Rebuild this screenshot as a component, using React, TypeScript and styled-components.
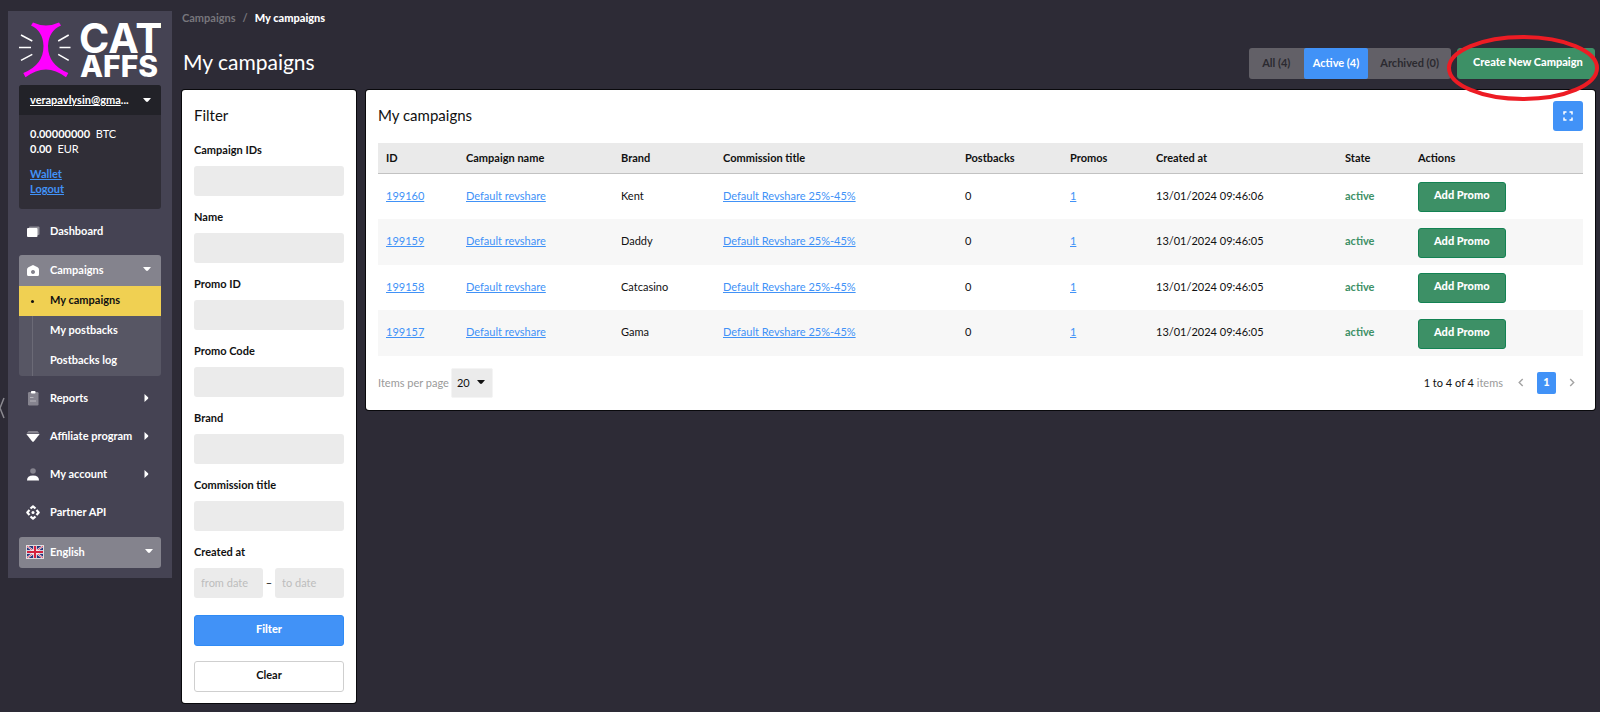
import React from "react";
import styled, { createGlobalStyle, css } from "styled-components";

const color = {
  page: "#2d2b36",
  sidebar: "#454353",
  card: "#302e37",
  cardHead: "#222228",
  raised: "#84838d",
  nested: "#575664",
  yellow: "#f0d052",
  blue: "#4192f7",
  green: "#3d9066",
  greenEdge: "#138253",
  field: "#ebebeb",
};

const GlobalStyle = createGlobalStyle`
  *, *::before, *::after { box-sizing: border-box; }
  body {
    margin: 0;
    background: ${color.page};
    color: #111;
    font-family: Lato, "Liberation Sans", sans-serif;
    font-size: 11px;
    line-height: 16px;
  }
  button, input, select { font: inherit; color: inherit; margin: 0; }
  h1, h2 { margin: 0; font-weight: 400; }
  p, ul { margin: 0; padding: 0; }
  ul { list-style: none; }
`;

const Page = styled.div`
  display: flex;
  align-items: flex-start;
  gap: 10px;
  padding: 11px 5px 9px 8px;
`;

const CollapseButton = styled.button`
  position: fixed;
  left: 0;
  top: 396px;
  width: 6px;
  height: 24px;
  padding: 0;
  border: 0;
  background: none;
  color: #8b8a91;
  svg { display: block; }
`;

/* Sidebar */

const Sidebar = styled.aside`
  flex: 0 0 164px;
  display: flex;
  flex-direction: column;
  padding: 0 11px 10px;
  background: ${color.sidebar};
  color: #fff;
  font-weight: 700;
`;

const LogoLink = styled.a`
  height: 74px;
  svg { display: block; }
`;

const UserCard = styled.section`
  height: 124px;
  border-radius: 3px;
  background: ${color.card};
  overflow: hidden;
`;

const UserHead = styled.div`
  display: flex;
  align-items: center;
  justify-content: space-between;
  height: 30px;
  padding: 0 10px 0 11px;
  background: ${color.cardHead};
  white-space: nowrap;
`;

const UserMail = styled.a`
  color: #fff;
`;

const UserBody = styled.div`
  padding: 11px 11px 0;
  line-height: 15px;
  font-weight: 400;
`;

const UserLinks = styled.div`
  display: flex;
  flex-direction: column;
  align-items: flex-start;
  margin-top: 10px;
  font-weight: 700;
`;

const TextLink = styled.a`
  color: ${color.blue};
  text-decoration: underline;
`;

const Nav = styled.nav`
  margin-top: 8px;
`;

const NavList = styled.ul`
  display: flex;
  flex-direction: column;
  gap: 8px;
`;

const NavGroup = styled.li<{ $open?: boolean }>`
  border-radius: 3px;
  overflow: hidden;
  background: ${(p) => (p.$open ? color.nested : "transparent")};
`;

const NavLink = styled.a<{ $open?: boolean }>`
  display: flex;
  align-items: center;
  height: ${(p) => (p.$open ? "31px" : "30px")};
  padding: 0 10px 2px 5px;
  color: #fff;
  text-decoration: none;
  white-space: nowrap;
  background: ${(p) => (p.$open ? color.raised : "transparent")};
  span { flex: 1; margin-left: 8px; }
`;

const SubLink = styled.a<{ $active?: boolean }>`
  display: flex;
  height: 30px;
  line-height: 28px;
  text-decoration: none;
  color: ${(p) => (p.$active ? "#111" : "#fff")};
  background: ${(p) => (p.$active ? color.yellow : "transparent")};
`;

const SubMark = styled.i<{ $active?: boolean }>`
  flex: none;
  ${(p) =>
    p.$active
      ? css`
          align-self: center;
          width: 3px;
          height: 3px;
          margin: 0 16px 0 12px;
          border-radius: 50%;
          background: #111;
        `
      : css`
          width: 1px;
          margin: 0 17px 0 13px;
          background: #6b6a76;
        `}
`;

const LanguageBox = styled.label`
  display: flex;
  align-items: center;
  height: 31px;
  margin-top: 9px;
  padding: 0 8px 2px 7px;
  border-radius: 3px;
  background: ${color.raised};
`;

const LanguageSelect = styled.select`
  flex: 1;
  appearance: none;
  border: 0;
  padding: 0;
  margin-left: 6px;
  background: none;
`;

/* Main column */

const Main = styled.main`
  flex: 1;
  min-width: 0;
`;

const Breadcrumbs = styled.nav`
  display: flex;
  gap: 7px;
  line-height: 14px;
  color: #77767c;
  font-weight: 700;
  a { color: inherit; text-decoration: none; }
  strong { color: #fff; }
`;

const Heading = styled.header`
  display: flex;
  align-items: center;
  height: 31px;
  margin: 23px 0 11px;
`;

const Title = styled.h1`
  flex: 1;
  padding: 0 1px 4px;
  color: #fff;
  font-size: 21px;
  line-height: 28px;
`;

const Segments = styled.div`
  display: flex;
  height: 31px;
  margin-right: 6px;
  border-radius: 3px;
  background: #626067;
`;

const Segment = styled.button<{ $active?: boolean }>`
  min-width: 55px;
  border: 0;
  padding: ${(p) => (p.$active ? "0 9px 2px" : "0 12px 2px")};
  border-radius: 2px;
  font-weight: 700;
  color: ${(p) => (p.$active ? "#fff" : "#2b2a30")};
  background: ${(p) => (p.$active ? color.blue : "transparent")};
`;

const CreateWrap = styled.div`
  position: relative;
`;

const Button = styled.button<{ $tone: "green" | "blue" | "plain"; $wide?: boolean }>`
  height: ${(p) => (p.$wide ? "31px" : "30px")};
  padding: 0 15px 4px;
  border: 1px solid;
  border-radius: 3px;
  font-weight: 900;
  white-space: nowrap;
  ${(p) =>
    p.$tone === "green" &&
    css`
      color: #fff;
      background: ${color.green};
      border-color: ${color.greenEdge};
    `}
  ${(p) =>
    p.$tone === "blue" &&
    css`
      color: #fff;
      background: ${color.blue};
      border-color: #2f8bf5;
    `}
  ${(p) =>
    p.$tone === "plain" &&
    css`
      font-weight: 700;
      background: #fff;
      border-color: #cfcfcf;
    `}
`;

const CreateButton = styled(Button)`
  width: 138px;
  border-color: ${color.green};
`;

const Highlight = styled.svg`
  position: absolute;
  left: -10px;
  top: -13px;
  width: 152px;
  height: 66px;
  pointer-events: none;
`;

const Columns = styled.div`
  display: flex;
  align-items: flex-start;
  gap: 10px;
`;

const Panel = styled.section`
  padding: 11px 12px;
  border-radius: 3px;
  background: #fff;
  box-shadow: 0 0 0 1px #09090c;
`;

const PanelTitle = styled.h2`
  padding-bottom: 2px;
  font-size: 15px;
  line-height: 20px;
`;

const FilterPanel = styled(Panel)`
  flex: 0 0 174px;
  display: flex;
  flex-direction: column;
  padding-top: 15px;
`;

const Fields = styled.div`
  display: flex;
  flex-direction: column;
  gap: 13px;
  margin-top: 15px;
`;

const Field = styled.div`
  display: flex;
  flex-direction: column;
  gap: 8px;
  label { font-weight: 700; }
`;

const TextInput = styled.input`
  width: 100%;
  min-width: 0;
  height: 30px;
  padding: 0 7px 2px;
  border: 0;
  border-radius: 3px;
  background: ${color.field};
  &::placeholder { color: #bdbdbd; opacity: 1; }
`;

const DateRange = styled.div`
  display: grid;
  grid-template-columns: 1fr 12px 1fr;
  align-items: center;
  text-align: center;
`;

const FilterActions = styled.div`
  display: flex;
  flex-direction: column;
  gap: 15px;
  margin-top: 17px;
`;

const ListPanel = styled(Panel)`
  flex: 1;
  min-width: 0;
`;

const ListHead = styled.div`
  display: flex;
  align-items: center;
  justify-content: space-between;
  height: 30px;
  margin-bottom: 12px;
`;

const IconButton = styled.button`
  display: grid;
  place-items: center;
  width: 30px;
  height: 30px;
  padding: 0;
  border: 0;
  border-radius: 3px;
  color: #fff;
  background: ${color.blue};
`;

const Table = styled.table`
  width: 100%;
  table-layout: fixed;
  border-collapse: separate;
  border-spacing: 0;
  th, td {
    padding: 0 8px;
    text-align: left;
    white-space: nowrap;
  }
  th {
    height: 31px;
    background: #eaeaea;
    border-bottom: 1px solid #c2c2c2;
    font-weight: 700;
  }
  td { height: 45px; padding-bottom: 2px; }
  tbody tr:nth-child(even) td { height: 46px; background: #f7f7f7; }
  td:last-child { padding: 1px 8px 0; }
`;

const State = styled.strong`
  color: ${color.green};
`;

const ListFoot = styled.footer`
  display: flex;
  align-items: center;
  height: 31px;
  margin-top: 12px;
  padding-bottom: 2px;
  color: #9a9a9a;
`;

const PageSize = styled.label`
  flex: 1;
  display: flex;
  align-items: center;
  gap: 2px;
`;

const PageSizeBox = styled.span`
  display: flex;
  align-items: center;
  width: 42px;
  height: 30px;
  padding: 0 7px 0 5px;
  border: 1px solid #f4f4f4;
  border-radius: 2px;
  background: ${color.field};
  color: #111;
  select {
    flex: 1;
    min-width: 0;
    appearance: none;
    border: 0;
    padding: 0;
    background: none;
  }
`;

const Count = styled.p`
  margin-right: 10px;
  span { color: #111; }
`;

const Pager = styled.div`
  display: flex;
  align-items: center;
  gap: 8px;
  padding-right: 3px;
`;

const PagerButton = styled.button<{ $current?: boolean }>`
  display: grid;
  place-items: center;
  width: ${(p) => (p.$current ? "19px" : "16px")};
  height: 22px;
  padding: ${(p) => (p.$current ? "0 0 2px" : "0")};
  border: 0;
  border-radius: 2px;
  font-weight: 900;
  color: ${(p) => (p.$current ? "#fff" : "#a3a3a3")};
  background: ${(p) => (p.$current ? color.blue : "transparent")};
`;

/* Icons */

const CaretDown = () => (
  <svg width="8" height="5" viewBox="0 0 8 5" aria-hidden="true">
    <path d="M0 0h8L5 3.600q-1 .9-2 0z" fill="currentColor" />
  </svg>
);

const CaretRight = () => (
  <svg width="8" height="10" viewBox="0 0 8 10" aria-hidden="true">
    <path d="M1.500 1v8L5 5.800q.8-.8 0-1.600z" fill="currentColor" />
  </svg>
);

const Chevron = ({ flip }: { flip?: boolean }) => (
  <svg width="6" height="9" viewBox="0 0 6 9" aria-hidden="true">
    <path
      d={flip ? "M1.200 1l3.500 3.500-3.500 3.500" : "M4.700 1L1.200 4.500 4.700 8"}
      fill="none"
      stroke="currentColor"
      strokeWidth="1.400"
    />
  </svg>
);

const NavIcon = ({ children }: { children: React.ReactNode }) => (
  <svg width="18" height="16" viewBox="0 0 18 16" fill="#fff" aria-hidden="true">
    {children}
  </svg>
);

const icons = {
  dashboard: (
    <NavIcon>
      <rect x="5" y="3.500" width="10.500" height="8.500" rx="1" opacity=".4" />
      <rect x="3" y="5" width="10.500" height="9" rx="1" />
    </NavIcon>
  ),
  campaigns: (
    <NavIcon>
      <path
        fillRule="evenodd"
        d="M9 3l4.600 2.300q1.400.9 1.400 2.400v4.800q0 1.500-1.500 1.500h-9Q3 14 3 12.500V7.700q0-1.500 1.400-2.400zM9 8a2 2 0 1 0 .01 0z"
      />
    </NavIcon>
  ),
  reports: (
    <NavIcon>
      <rect x="4" y="2" width="10.500" height="13.500" rx="1.200" opacity=".35" />
      <rect x="7" y="1" width="4.500" height="2.500" rx=".8" />
      <path d="M6 7h3.500v1H6zM6 10.500h6v1H6z" opacity=".4" />
    </NavIcon>
  ),
  affiliate: (
    <NavIcon>
      <path d="M4.500 3h9l2 2.500h-13z" opacity=".35" />
      <path d="M2.300 6h13.400L10 13.200q-1 1-2 0z" />
    </NavIcon>
  ),
  account: (
    <NavIcon>
      <circle cx="9" cy="5" r="2.800" opacity=".35" />
      <path d="M3 14.500q0-5 6-5t6 5z" />
    </NavIcon>
  ),
  api: (
    <NavIcon>
      <g fill="none" stroke="#fff" strokeWidth="2.200" strokeLinejoin="round">
        <path d="M6.500 4.500L9 2.300l2.500 2.200M6.500 12.500L9 14.700l2.500-2.200M5.500 6L3.300 8.500 5.500 11M12.500 6l2.200 2.500-2.200 2.500" />
      </g>
      <circle cx="9" cy="8.500" r="1.500" />
    </NavIcon>
  ),
};

const Flag = () => (
  <svg width="18" height="14" viewBox="0 0 18 14" aria-hidden="true">
    <rect width="18" height="14" fill="#ddd" />
    <rect x="1" y="1" width="16" height="12" fill="#27377c" />
    <path d="M1 1l16 12M17 1L1 13" stroke="#fff" strokeWidth="2" />
    <path d="M1 1l16 12M17 1L1 13" stroke="#d4213d" strokeWidth=".8" />
    <path d="M9 1v12M1 7h16" stroke="#fff" strokeWidth="3.600" />
    <path d="M9 1v12M1 7h16" stroke="#d4213d" strokeWidth="2.200" />
  </svg>
);

const Logo = () => (
  <svg width="142" height="74" viewBox="0 -10 142 74" role="img" aria-label="Cat Affs">
    <path
      d="M14 1.500Q27 7.500 40 1.500L42 4.500Q29.500 10 29 25 29 44 49.300 52L47 56.300Q27 40.500 6.500 56.300L4.300 52Q24.500 44 24.500 25 24 10 12 4.500z"
      fill="#f0f"
    />
    <path
      d="M2 14l11.300 6M0 26.500h12M2 39.300l11.300-6M49.700 14l-10.500 6M51.500 26.500h-11M49.700 39.300l-10.500-6"
      stroke="#fff"
      strokeWidth="1.500"
      fill="none"
    />
    <g fill="#fff" fontFamily="Inter, sans-serif">
      <text x="60" y="32" fontSize="41" fontWeight="700">CAT</text>
      <text x="61" y="56" fontSize="30" fontWeight="800">AFFS</text>
    </g>
  </svg>
);

const fields = ["Campaign IDs", "Name", "Promo ID", "Promo Code", "Brand", "Commission title"];

const tableColumns = [
  { title: "ID", width: 80 },
  { title: "Campaign name", width: 155 },
  { title: "Brand", width: 102 },
  { title: "Commission title", width: 242 },
  { title: "Postbacks", width: 105 },
  { title: "Promos", width: 86 },
  { title: "Created at", width: 189 },
  { title: "State", width: 73 },
  { title: "Actions", width: 173 },
];
const totalWidth = tableColumns.reduce((sum, c) => sum + c.width, 0);

const campaigns = [
  { id: 199160, brand: "Kent", created: "13/01/2024 09:46:06" },
  { id: 199159, brand: "Daddy", created: "13/01/2024 09:46:05" },
  { id: 199158, brand: "Catcasino", created: "13/01/2024 09:46:05" },
  { id: 199157, brand: "Gama", created: "13/01/2024 09:46:05" },
];

const laterNav = [
  { label: "Reports", icon: icons.reports, more: true },
  { label: "Affiliate program", icon: icons.affiliate, more: true },
  { label: "My account", icon: icons.account, more: true },
  { label: "Partner API", icon: icons.api, more: false },
];

export default function App() {
  return (
    <>
      <GlobalStyle />
      <CollapseButton aria-label="Collapse menu">
        <svg width="6" height="24" viewBox="0 0 6 24">
          <path d="M4 2L0 12l4 10" fill="none" stroke="currentColor" strokeWidth="1.500" />
        </svg>
      </CollapseButton>
      <Page>
        <Sidebar>
          <LogoLink href="#home">
            <Logo />
          </LogoLink>
          <UserCard>
            <UserHead>
              <span><UserMail href="#account">verapavlysin@gma</UserMail>...</span>
              <CaretDown />
            </UserHead>
            <UserBody>
              <p><strong>0.00000000</strong>&nbsp; BTC</p>
              <p><strong>0.00</strong>&nbsp; EUR</p>
              <UserLinks>
                <TextLink href="#wallet">Wallet</TextLink>
                <TextLink href="#logout">Logout</TextLink>
              </UserLinks>
            </UserBody>
          </UserCard>
          <Nav aria-label="Main">
            <NavList>
              <NavGroup>
                <NavLink href="#dashboard">{icons.dashboard}<span>Dashboard</span></NavLink>
              </NavGroup>
              <NavGroup $open>
                <NavLink href="#campaigns" $open>
                  {icons.campaigns}<span>Campaigns</span><CaretDown />
                </NavLink>
                <SubLink href="#my-campaigns" $active><SubMark $active />My campaigns</SubLink>
                <SubLink href="#my-postbacks"><SubMark />My postbacks</SubLink>
                <SubLink href="#postbacks-log"><SubMark />Postbacks log</SubLink>
              </NavGroup>
              {laterNav.map((item) => (
                <NavGroup key={item.label}>
                  <NavLink href="#menu">
                    {item.icon}<span>{item.label}</span>{item.more && <CaretRight />}
                  </NavLink>
                </NavGroup>
              ))}
            </NavList>
          </Nav>
          <LanguageBox>
            <Flag />
            <LanguageSelect aria-label="Language" defaultValue="en">
              <option value="en">English</option>
            </LanguageSelect>
            <CaretDown />
          </LanguageBox>
        </Sidebar>

        <Main>
          <Breadcrumbs aria-label="Breadcrumb">
            <a href="#campaigns">Campaigns</a>
            <span>/</span>
            <strong>My campaigns</strong>
          </Breadcrumbs>
          <Heading>
            <Title>My campaigns</Title>
            <Segments>
              <Segment>All (4)</Segment>
              <Segment $active>Active (4)</Segment>
              <Segment>Archived (0)</Segment>
            </Segments>
            <CreateWrap>
              <CreateButton $tone="green" $wide>Create New Campaign</CreateButton>
              <Highlight viewBox="0 0 152 66" aria-hidden="true">
                <ellipse cx="76" cy="33" rx="74" ry="31" fill="none" stroke="#ed1c24" strokeWidth="4" />
              </Highlight>
            </CreateWrap>
          </Heading>

          <Columns>
            <FilterPanel>
              <PanelTitle>Filter</PanelTitle>
              <Fields>
                {fields.map((name, i) => (
                  <Field key={name}>
                    <label htmlFor={`filter-${i}`}>{name}</label>
                    <TextInput id={`filter-${i}`} />
                  </Field>
                ))}
                <Field>
                  <label htmlFor="from-date">Created at</label>
                  <DateRange>
                    <TextInput id="from-date" placeholder="from date" />
                    <span>–</span>
                    <TextInput aria-label="Created until" placeholder="to date" />
                  </DateRange>
                </Field>
              </Fields>
              <FilterActions>
                <Button $tone="blue" $wide>Filter</Button>
                <Button $tone="plain" $wide>Clear</Button>
              </FilterActions>
            </FilterPanel>

            <ListPanel>
              <ListHead>
                <PanelTitle>My campaigns</PanelTitle>
                <IconButton aria-label="Full screen">
                  <svg width="10" height="10" viewBox="0 0 10 10">
                    <path
                      d="M1 3.500V1h2.500M6.500 1H9v2.500M9 6.500V9H6.500M3.500 9H1V6.500"
                      fill="none"
                      stroke="currentColor"
                      strokeWidth="1.500"
                    />
                  </svg>
                </IconButton>
              </ListHead>
              <Table>
                <colgroup>
                  {tableColumns.map((c) => (
                    <col key={c.title} style={{ width: `${(c.width / totalWidth) * 100}%` }} />
                  ))}
                </colgroup>
                <thead>
                  <tr>
                    {tableColumns.map((c) => (
                      <th key={c.title} scope="col">{c.title}</th>
                    ))}
                  </tr>
                </thead>
                <tbody>
                  {campaigns.map((row) => (
                    <tr key={row.id}>
                      <td><TextLink href="#campaign">{row.id}</TextLink></td>
                      <td><TextLink href="#campaign">Default revshare</TextLink></td>
                      <td>{row.brand}</td>
                      <td><TextLink href="#commission">Default Revshare 25%-45%</TextLink></td>
                      <td>0</td>
                      <td><TextLink href="#promos">1</TextLink></td>
                      <td>{row.created}</td>
                      <td><State>active</State></td>
                      <td><Button $tone="green">Add Promo</Button></td>
                    </tr>
                  ))}
                </tbody>
              </Table>
              <ListFoot>
                <PageSize>
                  Items per page
                  <PageSizeBox>
                    <select defaultValue="20">
                      <option value="20">20</option>
                    </select>
                    <CaretDown />
                  </PageSizeBox>
                </PageSize>
                <Count><span>1 to 4 of 4</span> items</Count>
                <Pager>
                  <PagerButton aria-label="Previous page"><Chevron /></PagerButton>
                  <PagerButton $current>1</PagerButton>
                  <PagerButton aria-label="Next page"><Chevron flip /></PagerButton>
                </Pager>
              </ListFoot>
            </ListPanel>
          </Columns>
        </Main>
      </Page>
    </>
  );
}
